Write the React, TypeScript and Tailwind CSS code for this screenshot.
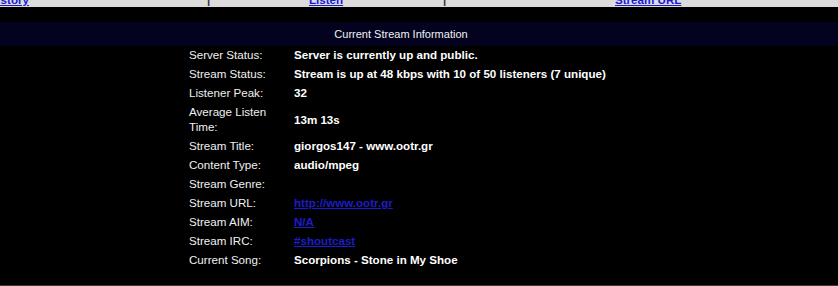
import React from 'react';

type Row = { label: string; value?: string; link?: boolean };

const ROWS: Row[] = [
  { label: 'Server Status:', value: 'Server is currently up and public.' },
  { label: 'Stream Status:', value: 'Stream is up at 48 kbps with 10 of 50 listeners (7 unique)' },
  { label: 'Listener Peak:', value: '32' },
  { label: 'Average Listen Time:', value: '13m 13s' },
  { label: 'Stream Title:', value: 'giorgos147 - www.ootr.gr' },
  { label: 'Content Type:', value: 'audio/mpeg' },
  { label: 'Stream Genre:', value: '' },
  { label: 'Stream URL:', value: 'http://www.ootr.gr', link: true },
  { label: 'Stream AIM:', value: 'N/A', link: true },
  { label: 'Stream IRC:', value: '#shoutcast', link: true },
  { label: 'Current Song:', value: 'Scorpions - Stone in My Shoe' },
];

const App: React.FC = () => {
  return (
    <div className="w-[838px] h-[286px] bg-black overflow-hidden flex flex-col text-[11.6px] leading-[15px]" style={{ fontFamily: '"Liberation Sans", Arial, sans-serif' }}>
      {/* nav bar, scrolled mostly out of view */}
      <div className="h-[7px] shrink-0 bg-[#dcdcdc] overflow-hidden">
        <div className="flex items-baseline -mt-[8px] font-bold whitespace-nowrap">
          <a className="ml-[-11px] w-[218px] text-[#1a1ad6] underline">History</a>
          <span className="w-[102px] text-[#333]">|</span>
          <a className="w-[134px] text-[#1a1ad6] underline">Listen</a>
          <span className="w-[172px] text-[#333]">|</span>
          <a className="text-[#1a1ad6] underline">Stream URL</a>
        </div>
      </div>

      <div className="h-[15px] shrink-0" />

      {/* section header */}
      <div className="h-[24px] shrink-0 bg-[#03031f] flex items-center justify-center pr-[36px] text-[11px] text-[#f2f2f2]">
        Current Stream Information
      </div>

      <div className="pl-[186px] -mt-px flex-1">
        <table className="border-collapse">
          <tbody>
            {ROWS.map((r) => (
              <tr key={r.label}>
                <td className="w-[105px] pl-[3px] pr-[3px] py-[2px] align-middle text-[#f0f0f0]">{r.label}</td>
                <td className="px-[3px] py-[2px] align-middle font-bold text-white whitespace-nowrap">
                  {r.link ? <a className="text-[#1c1cc8] underline">{r.value}</a> : r.value}
                </td>
              </tr>
            ))}
          </tbody>
        </table>
      </div>

      <div className="h-px shrink-0 bg-[#3a3a3a]" />
    </div>
  );
};

export default App;
